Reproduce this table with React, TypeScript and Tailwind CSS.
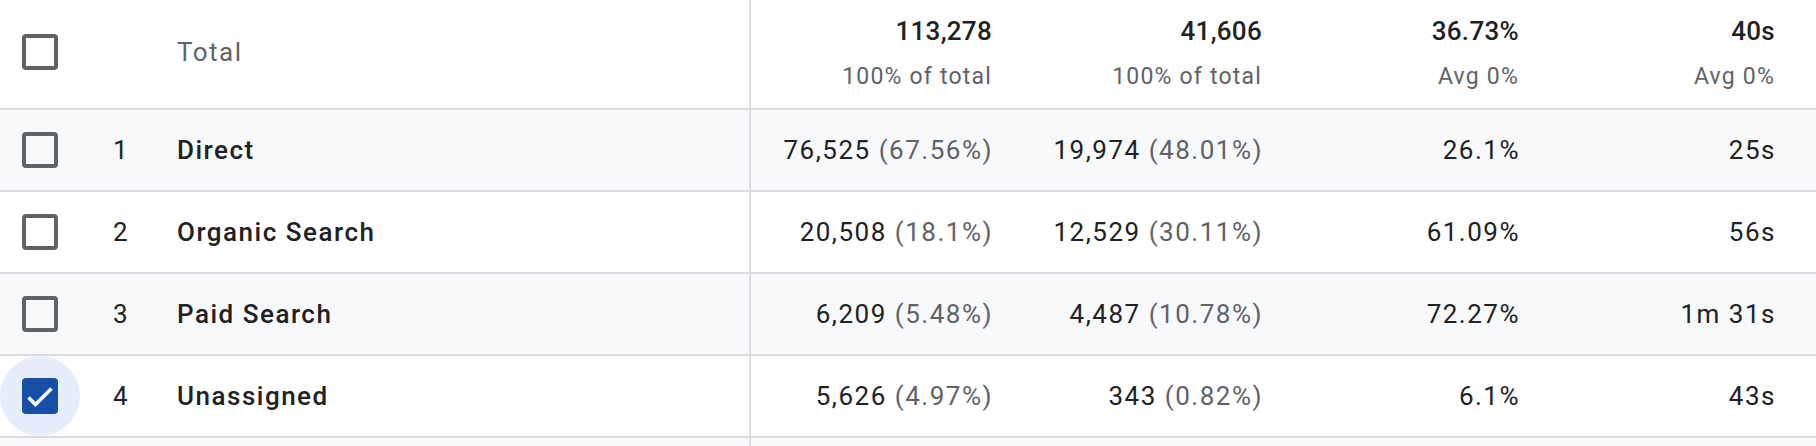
import React from "react";

type Row = {
  n: number;
  name: string;
  a: string;
  ap: string;
  b: string;
  bp: string;
  c: string;
  d: string;
  checked?: boolean;
};

const rows: Row[] = [
  { n: 1, name: "Direct", a: "76,525", ap: "(67.56%)", b: "19,974", bp: "(48.01%)", c: "26.1%", d: "25s" },
  { n: 2, name: "Organic Search", a: "20,508", ap: "(18.1%)", b: "12,529", bp: "(30.11%)", c: "61.09%", d: "56s" },
  { n: 3, name: "Paid Search", a: "6,209", ap: "(5.48%)", b: "4,487", bp: "(10.78%)", c: "72.27%", d: "1m 31s" },
  { n: 4, name: "Unassigned", a: "5,626", ap: "(4.97%)", b: "343", bp: "(0.82%)", c: "6.1%", d: "43s", checked: true },
];

function Checkbox({ checked }: { checked?: boolean }) {
  if (checked) {
    return (
      <div className="w-[80px] h-[80px] rounded-full bg-[#e6eefc] flex items-center justify-center">
        <div className="w-[36px] h-[36px] rounded-[4px] bg-[#174ea6] flex items-center justify-center">
          <svg width="36" height="36" viewBox="0 0 36 36">
            <polyline
              points="6.5,19.5 13.5,26.5 29.5,10.5"
              fill="none"
              stroke="#ffffff"
              strokeWidth="3.6"
              strokeLinecap="butt"
              strokeLinejoin="miter"
            />
          </svg>
        </div>
      </div>
    );
  }
  return (
    <div className="w-[80px] h-[80px] flex items-center justify-center">
      <div className="w-[36px] h-[36px] rounded-[4px] border-[4px] border-[#5f6368]" />
    </div>
  );
}

export default function App() {
  return (
    <div className="w-[1816px] h-[446px] overflow-hidden bg-white font-['Roboto',sans-serif] text-[#202124]">
      {/* Header */}
      <div className="flex h-[110px] border-b-2 border-[#dadce0]">
        <div className="w-[751px] border-r-2 border-[#dadce0] flex items-center pb-[4px]">
          <Checkbox />
          <div className="w-[80px]" />
          <div className="pl-[17px] text-[26px] tracking-[1.5px] text-[#5f6368]">Total</div>
        </div>
        {[
          { v: "113,278", s: "100% of total", w: "w-[282px]" },
          { v: "41,606", s: "100% of total", w: "w-[270px]" },
          { v: "36.73%", s: "Avg 0%", w: "w-[257px]" },
          { v: "40s", s: "Avg 0%", w: "flex-1" },
        ].map((h, i) => (
          <div key={i} className={`${h.w} flex flex-col items-end pt-[15px] pr-[41px]`}>
            <div className="text-[26px] leading-[32px] font-medium tracking-[0.3px]">{h.v}</div>
            <div className="mt-[16px] text-[23px] leading-[28px] tracking-[1.2px] text-[#5f6368]">{h.s}</div>
          </div>
        ))}
      </div>

      {rows.map((r, i) => (
        <div
          key={r.n}
          className={`flex h-[82px] border-b-2 border-[#dadce0] text-[26px] tracking-[1.5px] ${
            i % 2 === 0 ? "bg-[#f8f9fa]" : "bg-white"
          }`}
        >
          <div className="w-[751px] border-r-2 border-[#dadce0] flex items-center">
            <Checkbox checked={r.checked} />
            <div className="w-[78px] ml-[2px] text-center">{r.n}</div>
            <div className="pl-[17px] font-medium">{r.name}</div>
          </div>
          <div className="w-[282px] flex items-center justify-end pr-[40px]">
            {r.a}
            <span className="ml-[8px] text-[#5f6368]">{r.ap}</span>
          </div>
          <div className="w-[270px] flex items-center justify-end pr-[40px]">
            {r.b}
            <span className="ml-[8px] text-[#5f6368]">{r.bp}</span>
          </div>
          <div className="w-[257px] flex items-center justify-end pr-[40px]">{r.c}</div>
          <div className="flex-1 flex items-center justify-end pr-[40px]">{r.d}</div>
        </div>
      ))}

      <div className="flex h-[20px] bg-[#f8f9fa]">
        <div className="w-[751px] border-r-2 border-[#dadce0]" />
      </div>
    </div>
  );
}
